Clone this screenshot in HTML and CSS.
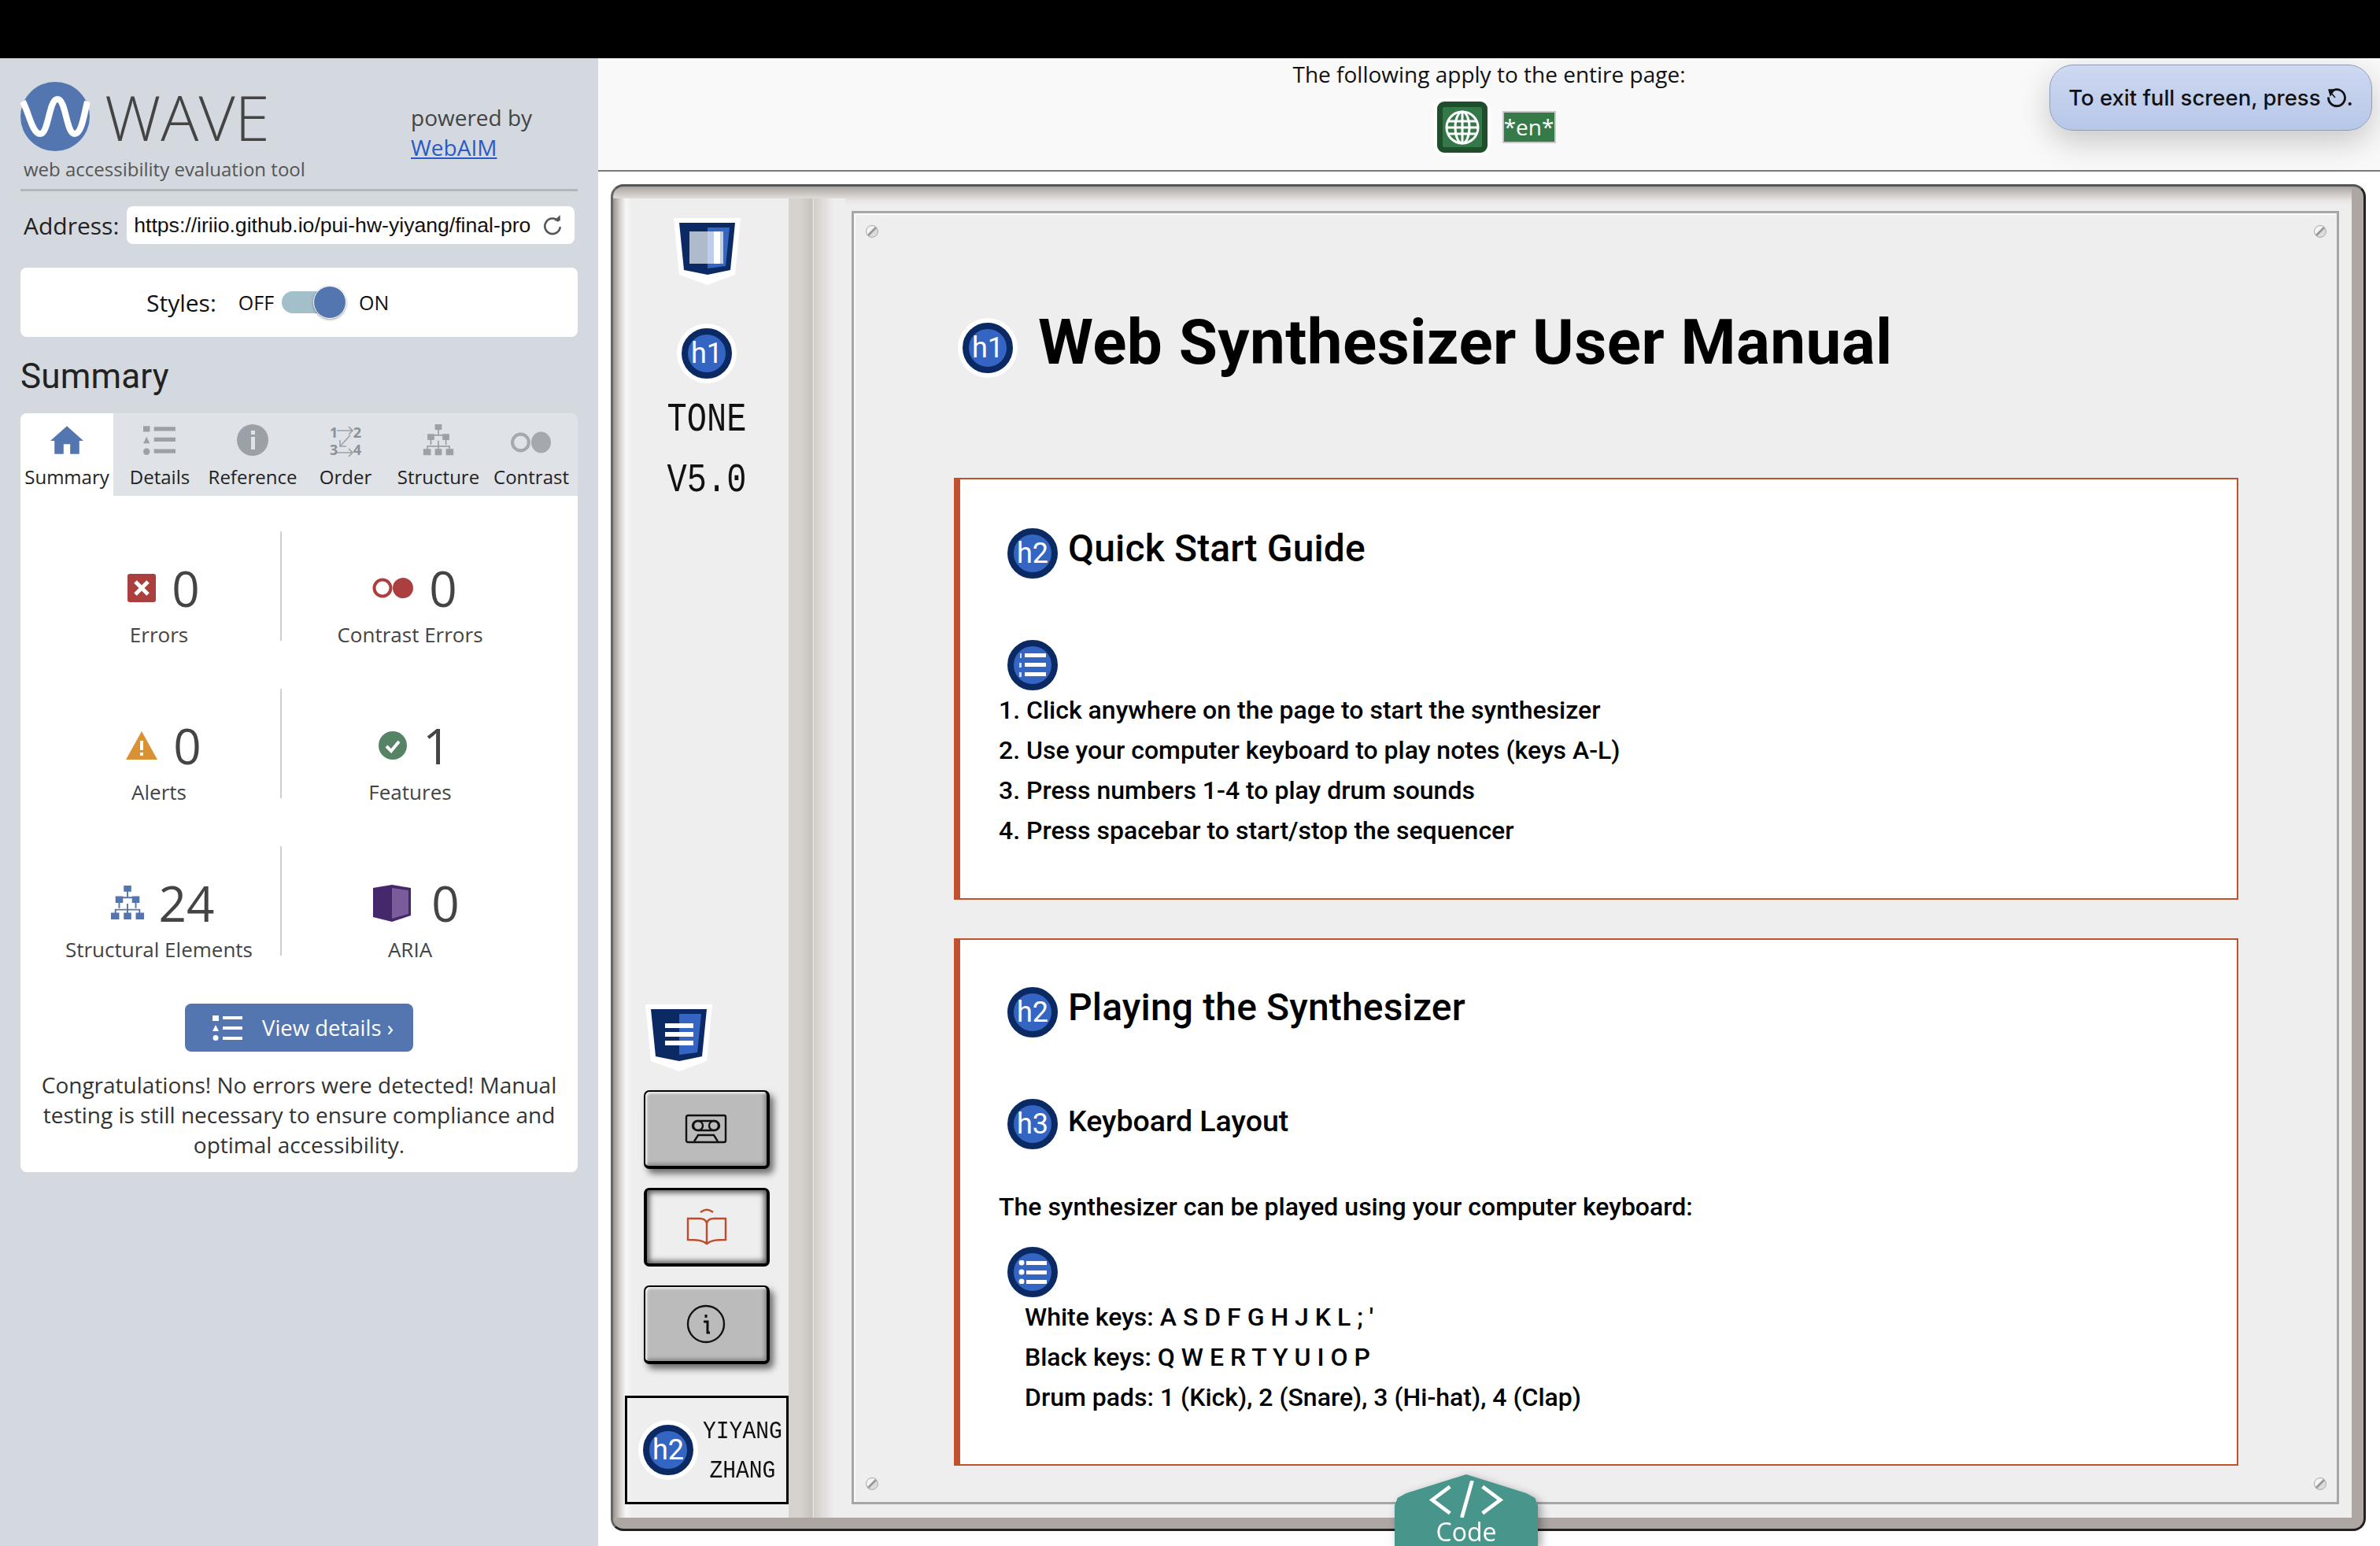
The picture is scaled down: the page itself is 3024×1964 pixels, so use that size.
FILE: index.html
```html
<!DOCTYPE html>
<html lang="en">
<head>
    <meta charset="UTF-8">
    <title>WAVE Report</title>
    <link rel="stylesheet" href="styles.css">
</head>
<body>
    <svg class="defs" width="0" height="0">
        <symbol id="tree" viewBox="0 0 44 46">
            <path d="M22 6v10M11 16v14M33 16v14M11 16h22M22 24v6M6 38v-6h32v6M22 30v8" fill="none" stroke="currentColor" stroke-width="2"/>
            <path d="M17 0h10v8H17zM6 14h10v9H6zM28 14h10v9H28zM0 36h11v9H0zM17 36h10v9H17zM33 36h11v9H33z" fill="currentColor"/>
        </symbol>
        <symbol id="shield" viewBox="0 0 85 85">
            <path d="M0 0h85l-7 72-35 13-36-13z" fill="#fff"/>
            <path d="M7 6h71l-6 60-29 6-30-6z" fill="#0b2a63"/>
            <path d="M43 12h28l-5 49-23 3z" fill="#3565c3"/>
        </symbol>
    </svg>

    <div class="blackbar"></div>

    <div class="app">
        <aside class="sidebar">
            <header class="brand">
                <div class="brand-left">
                    <div class="logo-row">
                        <svg class="logo" viewBox="0 0 88 88">
                            <circle cx="44" cy="44" r="44" fill="#5476b0"/>
                            <path d="M3 25C11 40 15 66 25 66 36 66 36 22 47 22 58 22 58 66 69 66 78 66 81 40 85 25" fill="none" stroke="#fff" stroke-width="8"/>
                        </svg>
                        <span class="wave">WAVE</span>
                    </div>
                    <div class="tagline">web accessibility evaluation tool</div>
                </div>
                <div class="powered">powered by<br><a href="#">WebAIM</a></div>
            </header>

            <div class="address-row">
                <label class="address-label">Address:</label>
                <div class="address-box">
                    <span class="address-url">https://iriio.github.io/pui-hw-yiyang/final-pro</span>
                    <svg class="reload" viewBox="0 0 24 24"><path d="M19 7.500A9 9 0 1 0 21 14" fill="none" stroke="#555" stroke-width="2.400"/><path d="M14 7h7V0z" fill="#555"/></svg>
                </div>
            </div>

            <div class="styles-card">
                <span class="styles-label">Styles:</span>
                <span class="styles-state off">OFF</span>
                <span class="toggle"><span class="knob"></span></span>
                <span class="styles-state">ON</span>
            </div>

            <h2 class="summary-title">Summary</h2>

            <nav class="tabs">
                <div class="tab active">
                    <svg class="tab-icon" viewBox="0 0 40 34"><path d="M20 0L0 18h5v16h11V22h8v12h11V18h5z" fill="#5476b0"/></svg>
                    <span>Summary</span>
                </div>
                <div class="tab">
                    <svg class="tab-icon" viewBox="0 0 40 36"><path d="M0 1h8v7H0zM4 14l4 8H0zM4 28a4 4 0 1 1 0 8 4 4 0 0 1 0-8zM13 2h26v5H13zM13 15h26v5H13zM13 29h26v5H13z" fill="#9ba1a6"/></svg>
                    <span>Details</span>
                </div>
                <div class="tab">
                    <svg class="tab-icon" viewBox="0 0 40 40"><circle cx="20" cy="20" r="20" fill="#9ba1a6"/><path d="M18 8h5v5h-5zM18 16h5v16h-5z" fill="#dfe3e7"/></svg>
                    <span>Reference</span>
                </div>
                <div class="tab">
                    <div class="order-icon">
                        <span>1</span><span>2</span><span>3</span><span>4</span>
                        <svg viewBox="0 0 40 44"><path d="M9 8h20m-5-5l5 5-5 5M9 36h20m-5-5l5 5-5 5M26 14L13 28m0-8v8h8" fill="none" stroke="#9ba1a6" stroke-width="1.600"/></svg>
                    </div>
                    <span>Order</span>
                </div>
                <div class="tab">
                    <svg class="tab-icon tree-gray"><use href="#tree"/></svg>
                    <span>Structure</span>
                </div>
                <div class="tab">
                    <svg class="tab-icon contrast-icon" viewBox="0 0 50 32"><circle cx="12" cy="16" r="10" fill="none" stroke="#a4a9ae" stroke-width="4"/><ellipse cx="37" cy="16" rx="12" ry="13" fill="#a4a9ae"/></svg>
                    <span>Contrast</span>
                </div>
            </nav>

            <section class="summary-card">
                <div class="stats">
                    <div class="stat divided">
                        <div class="stat-top">
                            <svg class="stat-icon" width="36" height="36" viewBox="0 0 36 36"><rect width="36" height="36" rx="3" fill="#ab3f3f"/><path d="M10 10l16 16M26 10L10 26" stroke="#fff" stroke-width="5"/></svg>
                            <span class="stat-num">0</span>
                        </div>
                        <div class="stat-label">Errors</div>
                    </div>
                    <div class="stat">
                        <div class="stat-top">
                            <svg class="stat-icon" width="52" height="26" viewBox="0 0 52 26"><circle cx="13" cy="13" r="10.500" fill="none" stroke="#ab3f3f" stroke-width="4"/><circle cx="39" cy="13" r="13" fill="#ab3f3f"/></svg>
                            <span class="stat-num">0</span>
                        </div>
                        <div class="stat-label">Contrast Errors</div>
                    </div>
                    <div class="stat divided">
                        <div class="stat-top">
                            <svg class="stat-icon" width="40" height="36" viewBox="0 0 40 36"><path d="M20 0l20 36H0z" fill="#d99133"/><path d="M18 12h4v12h-4zM18 27h4v4h-4z" fill="#fff"/></svg>
                            <span class="stat-num">0</span>
                        </div>
                        <div class="stat-label">Alerts</div>
                    </div>
                    <div class="stat">
                        <div class="stat-top">
                            <svg class="stat-icon" width="36" height="36" viewBox="0 0 36 36"><circle cx="18" cy="18" r="18" fill="#548465"/><path d="M10 19l6 6 10-12" fill="none" stroke="#fff" stroke-width="4"/></svg>
                            <span class="stat-num">1</span>
                        </div>
                        <div class="stat-label">Features</div>
                    </div>
                    <div class="stat divided">
                        <div class="stat-top tree-top">
                            <svg class="stat-icon tree-blue" width="44" height="44"><use href="#tree"/></svg>
                            <span class="stat-num">24</span>
                        </div>
                        <div class="stat-label">Structural Elements</div>
                    </div>
                    <div class="stat">
                        <div class="stat-top aria-top">
                            <svg class="stat-icon" width="48" height="47" viewBox="0 0 48 47"><path d="M0 4l24-4 24 4v35l-24 8-24-6z" fill="#45276b"/><path d="M24 4l21 3v30l-21 6z" fill="#7b5c9b"/></svg>
                            <span class="stat-num">0</span>
                        </div>
                        <div class="stat-label">ARIA</div>
                    </div>
                </div>

                <button class="details-btn">
                    <svg width="38" height="32" viewBox="0 0 38 32"><path d="M0 0h8v7H0zM4 12l4 8H0zM4 25a3.500 3.500 0 1 1 0 7 3.500 3.500 0 0 1 0-7zM13 1h25v4H13zM13 14h25v4H13zM13 27h25v4H13z" fill="#fff"/></svg>
                    View details ›
                </button>

                <p class="congrats">Congratulations! No errors were detected! Manual testing is still necessary to ensure compliance and optimal accessibility.</p>
            </section>
        </aside>

        <main class="report">
            <div class="page-bar">
                <p class="page-bar-text">The following apply to the entire page:</p>
                <div class="page-icons">
                    <span class="globe">
                        <svg width="46" height="46" viewBox="0 0 46 46"><g fill="none" stroke="#fff" stroke-width="3"><circle cx="23" cy="23" r="20"/><ellipse cx="23" cy="23" rx="9" ry="20"/><path d="M23 3v40M5 15h36M5 31h36M3 23h40"/></g></svg>
                    </span>
                    <span class="lang-tag">*en*</span>
                </div>
            </div>

            <div class="toast">
                To exit full screen, press
                <svg class="toast-key" width="26" height="26" viewBox="0 0 26 26"><path d="M9 3.500a10.500 10.500 0 1 1-6.500 9" fill="none" stroke="#111" stroke-width="2.800"/><path d="M3 3h7l-5 7zM11 13L5 6" fill="#111" stroke="#111" stroke-width="1.500"/></svg>.
            </div>

            <div class="stage">
                <div class="frame">
                    <div class="rail">
                        <svg class="shield" viewBox="0 0 85 85">
                            <use href="#shield"/>
                            <path d="M20 17h43v41H20z" fill="#fff" opacity=".68"/>
                            <path d="M51 17h8v41h-8z" fill="#fff"/>
                        </svg>
                        <span class="badge ringed rail-h1">h1</span>
                        <div class="tone">TONE</div>
                        <div class="tone">V5.0</div>

                        <svg class="shield shield-list" viewBox="0 0 85 85">
                            <use href="#shield"/>
                            <path d="M25 24h36v6H25zM25 35h36v6H25zM25 46h36v6H25z" fill="#fff"/>
                        </svg>

                        <button class="rail-btn">
                            <svg width="54" height="38" viewBox="0 0 54 38"><g fill="none" stroke="#111" stroke-width="2.400"><rect x="2" y="2" width="50" height="34" rx="2"/><rect x="10" y="9" width="34" height="12" rx="6"/><circle cx="17" cy="15" r="6"/><circle cx="37" cy="15" r="6"/><path d="M12 35l5-8h20l5 8"/></g></svg>
                        </button>
                        <button class="rail-btn current">
                            <svg width="52" height="50" viewBox="0 0 52 50"><g fill="none" stroke="#bc4c2a" stroke-width="2.400"><path d="M26 46c-6-5-14-5-24-5V14h15c4 0 8 2 9 6 1-4 5-6 9-6h15v27c-10 0-18 0-24 5zM26 20v26M18 6c5-4 11-4 16 0"/></g></svg>
                        </button>
                        <button class="rail-btn">
                            <svg width="50" height="50" viewBox="0 0 50 50"><circle cx="25" cy="25" r="23" fill="none" stroke="#111" stroke-width="2.400"/><path d="M22 22h5v14h3M25 13v4" fill="none" stroke="#111" stroke-width="3"/></svg>
                        </button>

                        <div class="author">
                            <span class="badge ringed">h2</span>
                            <div class="author-name">YIYANG<br>ZHANG</div>
                        </div>
                    </div>

                    <div class="panel-wrap">
                        <div class="panel">
                            <span class="screw tl"></span>
                            <span class="screw tr"></span>
                            <span class="screw bl"></span>
                            <span class="screw br"></span>

                            <div class="title-row">
                                <span class="badge ringed">h1</span>
                                <h1>Web Synthesizer User Manual</h1>
                            </div>

                            <section class="card">
                                <div class="heading-row">
                                    <span class="badge">h2</span>
                                    <h2>Quick Start Guide</h2>
                                </div>
                                <span class="badge list-badge first-list">
                                    <svg width="34" height="30" viewBox="0 0 34 30"><path d="M7 0h27v5H7zM7 12h27v5H7zM7 24h27v5H7z" fill="#fff"/><path d="M1 0h2v6H1zM0 12h3v6H0zM0 24h3v6H0z" fill="#cfd9f0"/></svg>
                                </span>
                                <p class="line">1. Click anywhere on the page to start the synthesizer</p>
                                <p class="line">2. Use your computer keyboard to play notes (keys A-L)</p>
                                <p class="line">3. Press numbers 1-4 to play drum sounds</p>
                                <p class="line">4. Press spacebar to start/stop the sequencer</p>
                            </section>

                            <section class="card card-second">
                                <div class="heading-row">
                                    <span class="badge">h2</span>
                                    <h2>Playing the Synthesizer</h2>
                                </div>
                                <div class="heading-row sub">
                                    <span class="badge">h3</span>
                                    <h3>Keyboard Layout</h3>
                                </div>
                                <p class="line intro">The synthesizer can be played using your computer keyboard:</p>
                                <span class="badge list-badge second-list">
                                    <svg width="36" height="30" viewBox="0 0 36 30"><circle cx="4" cy="3" r="3.500" fill="#fff"/><circle cx="4" cy="15" r="3.500" fill="#fff"/><circle cx="4" cy="27" r="3.500" fill="#fff"/><path d="M10 1h26v5H10zM10 13h26v5H10zM10 25h26v5H10z" fill="#fff"/></svg>
                                </span>
                                <p class="line keys">White keys: A S D F G H J K L ; '</p>
                                <p class="line keys">Black keys: Q W E R T Y U I O P</p>
                                <p class="line keys">Drum pads: 1 (Kick), 2 (Snare), 3 (Hi-hat), 4 (Clap)</p>
                            </section>
                        </div>
                    </div>
                </div>
            </div>

            <div class="code-tab">
                <div class="code-shape">
                    <svg width="100" height="50" viewBox="0 0 100 50"><path d="M28 8L4 26l24 18M72 8l24 18-24 18M58 0L44 50" fill="none" stroke="#fff" stroke-width="5"/></svg>
                    <span>Code</span>
                </div>
            </div>
        </main>
    </div>
</body>
</html>
```

FILE: styles.css
```css
* {
    box-sizing: border-box;
}
html, body {
    margin: 0;
    height: 1964px;
    overflow: hidden;
}
body {
    font-family: "Open Sans", sans-serif;
    background: #fff;
    color: #111;
    display: flex;
    flex-direction: column;
}
p, h1, h2, h3 {
    margin: 0;
}
.defs {
    position: absolute;
}
.blackbar {
    height: 74px;
    background: #000;
    flex: none;
}
.app {
    flex: 1;
    display: flex;
    min-height: 0;
}

/* sidebar */
.sidebar {
    width: 760px;
    flex: none;
    background: #d3d9de;
    padding: 0 26px;
}
.brand {
    height: 169px;
    border-bottom: 3px solid #b2b7bb;
    padding-top: 30px;
    display: flex;
    justify-content: space-between;
}
.logo-row {
    display: flex;
    align-items: center;
    gap: 19px;
}
.logo {
    width: 88px;
    height: 88px;
}
.wave {
    font-size: 80px;
    font-weight: 300;
    color: #444;
    line-height: 88px;
}
.tagline {
    font-size: 24px;
    color: #555;
    margin: 6px 0 0 4px;
    line-height: 34px;
}
.powered {
    width: 212px;
    font-size: 28px;
    line-height: 38px;
    color: #444;
    margin-top: 26px;
}
.powered a {
    color: #2a5bc5;
}
.address-row {
    display: flex;
    align-items: center;
    margin-top: 19px;
    padding-left: 4px;
    gap: 10px;
}
.address-label {
    font-size: 30px;
    color: #222;
}
.address-box {
    flex: 1;
    height: 48px;
    margin-right: 4px;
    background: #fff;
    border-radius: 8px;
    display: flex;
    align-items: center;
    justify-content: space-between;
    padding: 0 15px 0 9px;
}
.address-url {
    font-family: "Liberation Sans", Arial, sans-serif;
    font-size: 26.600px;
    color: #111;
    width: 510px;
    white-space: nowrap;
    overflow: hidden;
}
.reload {
    width: 26px;
    height: 26px;
}
.styles-card {
    height: 88px;
    margin-top: 30px;
    background: #fff;
    border-radius: 8px;
    display: flex;
    align-items: center;
    padding-left: 160px;
}
.styles-label {
    font-size: 30px;
    margin-right: 28px;
}
.styles-state {
    font-size: 25px;
}
.styles-state.off {
    margin-right: 10px;
}
.toggle {
    width: 72px;
    height: 28px;
    background: #a3bfca;
    border-radius: 14px;
    position: relative;
    margin-right: 26px;
}
.knob {
    position: absolute;
    right: -10px;
    top: -7px;
    width: 42px;
    height: 42px;
    border-radius: 50%;
    background: #5476b0;
    border: 1px solid #fff;
    box-shadow: 0 1px 3px rgba(0, 0, 0, 0.4);
}
.summary-title {
    font-size: 44px;
    font-weight: 400;
    line-height: 56px;
    margin-top: 22px;
    color: #222;
}
.tabs {
    margin-top: 19px;
    height: 105px;
    display: flex;
    background: #dfe3e7;
    border-radius: 8px 8px 0 0;
}
.tab {
    flex: 1;
    display: flex;
    flex-direction: column;
    align-items: center;
    justify-content: flex-end;
    font-size: 24px;
    line-height: 32px;
    padding-bottom: 8px;
    color: #222;
    white-space: nowrap;
    position: relative;
}
.tab.active {
    background: #fff;
    border-radius: 8px 0 0 0;
}
.tab-icon {
    width: 42px;
    height: 40px;
    position: absolute;
    top: 14px;
    left: 50%;
    margin-left: -21px;
}
.contrast-icon {
    width: 52px;
    margin-left: -26px;
    top: 17px;
}
.tree-gray {
    color: #9ba1a6;
}
.order-icon {
    position: absolute;
    top: 14px;
    left: 50%;
    width: 40px;
    height: 42px;
    margin-left: -20px;
    display: grid;
    grid-template-columns: 1fr 1fr;
    justify-items: stretch;
    align-content: space-between;
    font-size: 18px;
    font-weight: 700;
    line-height: 20px;
    color: #8b9196;
}
.order-icon span:nth-child(even) {
    text-align: right;
}
.order-icon svg {
    position: absolute;
    inset: 0;
}
.summary-card {
    background: #fff;
    border-radius: 0 0 8px 8px;
    height: 859px;
    padding-top: 45px;
}
.stats {
    display: grid;
    grid-template-columns: 310px 326px;
    grid-auto-rows: 139px;
    row-gap: 61px;
    padding-left: 22px;
}
.stat {
    text-align: center;
    padding-top: 37px;
}
.stat.divided {
    border-right: 2px solid #cdcfd1;
}
.stat-top {
    height: 70px;
    display: flex;
    justify-content: center;
    align-items: center;
    gap: 20px;
    padding-left: 12px;
}
.tree-top {
    gap: 18px;
    padding-left: 8px;
}
.aria-top {
    gap: 26px;
    padding-left: 16px;
}
.stat-num {
    font-size: 62px;
    line-height: 70px;
    color: #444;
}
.stat-label {
    font-size: 26px;
    line-height: 26px;
    margin-top: 11px;
    color: #444;
}
.tree-blue {
    color: #5476b0;
}
.details-btn {
    display: flex;
    align-items: center;
    gap: 25px;
    width: 290px;
    height: 61px;
    margin: 61px auto 0;
    padding-left: 35px;
    background: #5476b0;
    color: #fff;
    border: 0;
    border-radius: 8px;
    font-family: inherit;
    font-size: 27.500px;
}
.congrats {
    margin: 23px 26px 0;
    font-size: 28px;
    line-height: 38px;
    text-align: center;
    color: #333;
}

/* report */
.report {
    flex: 1;
    display: flex;
    flex-direction: column;
    position: relative;
    min-width: 0;
}
.page-bar {
    height: 144px;
    flex: none;
    background: #f9f9f9;
    border-bottom: 2px solid #777c74;
    text-align: center;
}
.page-bar-text {
    font-size: 28px;
    line-height: 40px;
    color: #111;
}
.page-icons {
    display: flex;
    justify-content: center;
    align-items: center;
    gap: 19px;
    margin-top: 15px;
    padding-left: 18px;
}
.globe {
    width: 64px;
    height: 65px;
    background: #34784a;
    border: 7px solid #1f4e2b;
    border-radius: 9px;
    box-shadow: 0 0 0 4px #fff;
    display: flex;
    align-items: center;
    justify-content: center;
}
.globe svg {
    flex: none;
}
.lang-tag {
    height: 41px;
    width: 68px;
    background: #377a4a;
    border: 2px solid #c9c9c9;
    color: #fff;
    font-size: 28px;
    line-height: 36px;
    text-align: center;
    white-space: nowrap;
}
.toast {
    position: absolute;
    top: 8px;
    right: 10px;
    width: 410px;
    height: 84px;
    display: flex;
    align-items: center;
    justify-content: center;
    gap: 7px;
    font-family: Inter, sans-serif;
    font-size: 27.500px;
    font-weight: 500;
    color: #111;
    white-space: nowrap;
    background: linear-gradient(#ced9f1, #b7c7e8);
    border: 1px solid #8f9cb8;
    border-radius: 30px;
    box-shadow: 0 14px 40px rgba(0, 0, 0, 0.2);
}
.toast-key {
    margin-right: -7px;
}
.stage {
    flex: 1;
    padding: 16px 18px 19px 16px;
    min-height: 0;
}
.frame {
    height: 100%;
    display: flex;
    border: 3px solid #222;
    border-top-color: #555;
    border-left-color: #666;
    border-radius: 16px;
    background:
        linear-gradient(#aea6a2, #aea6a2) right / 15px 100% no-repeat,
        linear-gradient(#aea6a2, #aea6a2) bottom / 100% 14px no-repeat,
        linear-gradient(#aaa5a1, #d6d2ce 12px, #e8e6e4 18px, #eee 24px) top / 100% 40px no-repeat,
        #eee;
    overflow: hidden;
}
.rail {
    width: 255px;
    flex: none;
    margin: 15px 0 14px;
    padding: 25px 32px 17px 15px;
    display: flex;
    flex-direction: column;
    align-items: center;
    background: linear-gradient(90deg, #989390 0, #d6d2ce 9px, #f6f6f6 16px, #eee 24px, #eee 223px, #d6d2ce 223px, #d6d2ce 238px, #c6c2be 253px, #f2f2f2 255px);
}
.shield {
    width: 85px;
    height: 85px;
    flex: none;
}
.badge {
    width: 64px;
    height: 64px;
    flex: none;
    border-radius: 50%;
    background: #3565c3;
    border: 8px solid #0b2a63;
    color: #fff;
    font-family: Roboto, sans-serif;
    font-size: 36px;
    line-height: 44px;
    text-align: center;
    display: flex;
    align-items: center;
    justify-content: center;
}
.ringed {
    box-shadow: 0 0 0 6px #fff;
}
.rail-h1 {
    margin-top: 55px;
}
.tone {
    font-family: "Liberation Mono", monospace;
    font-size: 42px;
    line-height: 77px;
    height: 77px;
    transform: scaleY(1.25);
    color: #111;
}
.rail-h1 + .tone {
    margin-top: 14px;
}
.shield-list {
    margin: auto 0 24px -72px;
}
.rail-btn {
    width: 160px;
    height: 100px;
    flex: none;
    margin-bottom: 24px;
    display: flex;
    align-items: center;
    justify-content: center;
    padding: 0;
    background: #bbb;
    border: solid #000;
    border-width: 2px 4px 4px 2px;
    border-radius: 7px;
    box-shadow: inset 2px 2px 3px #f2f2f2, inset -3px -3px 4px #8a8a8a, 5px 6px 8px rgba(0, 0, 0, 0.55);
}
.rail-btn.current {
    background: #eee;
    border: 4px solid #000;
    border-top-width: 3px;
    box-shadow: inset 0 0 7px 3px #555;
}
.author {
    width: 208px;
    height: 138px;
    flex: none;
    margin-top: 16px;
    border: 3px solid #000;
    display: flex;
    align-items: center;
    padding-left: 20px;
    gap: 12px;
}
.author-name {
    font-family: "Liberation Mono", monospace;
    font-size: 28px;
    line-height: 44px;
    margin-top: 3px;
    text-align: center;
    color: #111;
    transform: scaleY(1.15);
}
.panel-wrap {
    flex: 1;
    min-width: 0;
    margin: 15px 0 14px;
    padding: 16px 31px 17px 48px;
    background: linear-gradient(90deg, #d2cec9, #eee 26px) left / 40px 100% no-repeat;
}
.panel {
    height: 100%;
    position: relative;
    background: #eee;
    border: 3px solid #a6a6a6;
    box-shadow: inset 2px 2px 0 #fafafa;
    padding: 139px 125px 0 127px;
}
.screw {
    position: absolute;
    width: 16px;
    height: 16px;
    border-radius: 50%;
    border: 1px solid #aaa;
    background: linear-gradient(135deg, #f4f4f4 40%, #999 46%, #999 54%, #dcdcdc 60%);
}
.tl {
    top: 15px;
    left: 15px;
}
.tr {
    top: 15px;
    right: 13px;
}
.bl {
    bottom: 15px;
    left: 15px;
}
.br {
    bottom: 15px;
    right: 13px;
}
.title-row {
    display: flex;
    align-items: flex-start;
    margin-left: 11px;
    gap: 32px;
}
h1 {
    font-family: Roboto, sans-serif;
    font-size: 80px;
    font-weight: 700;
    letter-spacing: 0.44px;
    line-height: 64px;
    margin-top: -7px;
    color: #000;
    white-space: nowrap;
}
.card {
    background: #fff;
    border: 2px solid #c1502e;
    border-left-width: 8px;
    margin-top: 133px;
    padding: 62px 0 60px 49px;
}
.card-second {
    margin-top: 49px;
    padding-top: 60px;
    padding-bottom: 59px;
}
.heading-row {
    display: flex;
    align-items: flex-start;
    margin-left: 11px;
    gap: 13px;
}
h2 {
    font-family: Roboto, sans-serif;
    font-size: 48px;
    font-weight: 500;
    letter-spacing: 0.15px;
    line-height: 64px;
    margin-top: -6px;
    color: #000;
}
.sub {
    margin-top: 78px;
}
h3 {
    font-family: Roboto, sans-serif;
    font-size: 37.500px;
    font-weight: 500;
    line-height: 64px;
    margin-top: -4px;
    color: #000;
}
.list-badge {
    margin-left: 11px;
}
.first-list {
    margin-top: 78px;
}
.second-list {
    margin-top: 25px;
}
.line {
    font-family: Roboto, sans-serif;
    font-size: 32px;
    font-weight: 500;
    line-height: 51px;
    color: #000;
}
.intro {
    margin-top: 48px;
}
.keys {
    padding-left: 33px;
}
.code-tab {
    position: absolute;
    left: 1012px;
    bottom: 0;
    filter: drop-shadow(4px 4px 6px rgba(0, 0, 0, 0.35));
}
.code-shape {
    width: 182px;
    height: 91px;
    background: #48958c;
    clip-path: polygon(50% 0, 92% 24px, 98% 30px, 100% 40px, 100% 100%, 0 100%, 0 40px, 2% 30px, 8% 24px);
    display: flex;
    flex-direction: column;
    align-items: center;
    color: #fff;
    padding-top: 8px;
    font-size: 32px;
    line-height: 36px;
}
```
